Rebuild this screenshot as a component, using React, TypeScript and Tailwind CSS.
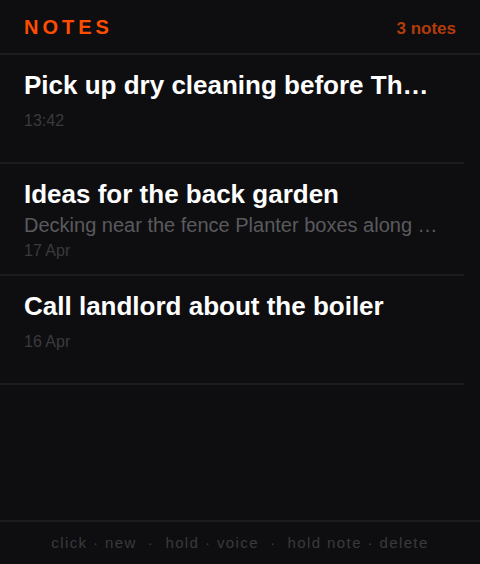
import React from "react";

type Note = { title: string; preview?: string; date: string };

const notes: Note[] = [
  { title: "Pick up dry cleaning before Thursday afternoon", date: "13:42" },
  {
    title: "Ideas for the back garden",
    preview: "Decking near the fence Planter boxes along the south wall",
    date: "17 Apr",
  },
  { title: "Call landlord about the boiler", date: "16 Apr" },
];

export default function App() {
  return (
    <div
      className="flex h-[564px] w-[480px] flex-col overflow-hidden bg-[#0e0e10]"
      style={{ fontFamily: '"Liberation Sans", Arial, sans-serif' }}
    >
      <header className="flex h-[55px] shrink-0 items-baseline justify-between border-b-2 border-[#1c1c1f] px-6 pt-[13px]">
        <span className="text-[20px] leading-[28px] font-bold tracking-[4px] text-[#ff4d00]">
          NOTES
        </span>
        <span className="text-[17px] leading-[24px] font-bold text-[#b23c0a]">
          3 notes
        </span>
      </header>

      <main className="flex-1 pr-4">
        {notes.map((n) => (
          <div
            key={n.title}
            className="flex min-h-[109px] flex-col border-b-2 border-[#1c1c1f] pt-[14px] pr-6 pb-[13px] pl-6"
          >
            <div className="truncate text-[26px] leading-[32px] font-bold text-white">
              {n.title}
            </div>
            {n.preview ? (
              <>
                <div className="mt-[1px] truncate text-[20px] leading-[28px] text-[#5a5a5e]">
                  {n.preview}
                </div>
                <div className="mt-[2px] text-[16px] leading-[20px] text-[#3a3a3e]">
                  {n.date}
                </div>
              </>
            ) : (
              <div className="mt-[10px] text-[16px] leading-[20px] text-[#3a3a3e]">
                {n.date}
              </div>
            )}
          </div>
        ))}
      </main>

      <footer className="flex h-[44px] shrink-0 items-center justify-center border-t-2 border-[#1c1c1f]">
        <span className="whitespace-pre text-[15px] leading-[20px] tracking-[1.4px] text-[#3a3a3e]">
          {"click · new  ·  hold · voice  ·  hold note · delete"}
        </span>
      </footer>
    </div>
  );
}
